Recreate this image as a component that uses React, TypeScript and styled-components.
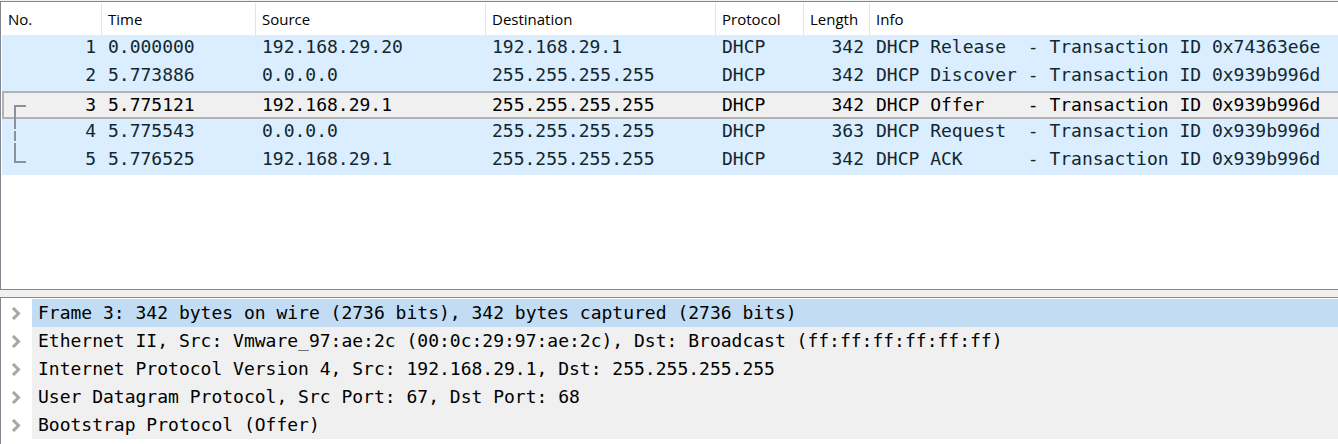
import React, { useState } from "react";
import styled, { createGlobalStyle, css } from "styled-components";

const GlobalStyle = createGlobalStyle`
  * { box-sizing: border-box; }
  body { margin: 0; background: #f0f0f0; color: #000; }
`;

const mono = css`
  font-family: "DejaVu Sans Mono", monospace;
  font-size: 18px;
`;

const Window = styled.main`
  display: flex;
  flex-direction: column;
  min-height: 100vh;
  padding-top: 1px;
`;

const Pane = styled.section`
  background: #fff;
  border-top: 1px solid #828790;
  border-left: 1px solid #828790;
  padding-left: 1px;
`;

const PacketPane = styled(Pane)`
  flex: 1;
  border-bottom: 1px solid #828790;
`;

const DetailsPane = styled(Pane)`
  padding: 1px 0 5px;
`;

const Splitter = styled.div`
  height: 7px;
  cursor: row-resize;
`;

const PacketTable = styled.table`
  width: 100%;
  table-layout: fixed;
  border-collapse: separate;
  border-spacing: 0;
`;

const Column = styled.col<{ $width?: number }>`
  width: ${(p) => (p.$width ? `${p.$width}px` : "auto")};
`;

const HeadCell = styled.th`
  height: 33px;
  padding: 0 6px;
  text-align: left;
  font: 400 15px "Open Sans", sans-serif;
  line-height: 20px;
  background: linear-gradient(#e5e5e5, #e5e5e5) right bottom / 1px 32px no-repeat;
  &:last-child { background: none; }
`;

const Cell = styled.td<{ $right?: boolean }>`
  position: relative;
  height: 28px;
  padding: 0 6px 4px;
  line-height: 24px;
  white-space: pre;
  text-align: ${(p) => (p.$right ? "right" : "left")};
`;

const PacketRow = styled.tr<{ $selected: boolean }>`
  ${mono}
  color: #12272e;
  background: #daeeff;
  ${(p) =>
    p.$selected &&
    css`
      color: #000;
      background: #f0f0f0;
      ${Cell} {
        padding-bottom: 0;
        border-top: 2px solid #b3b1b1;
        border-bottom: 2px solid #b3b1b1;
      }
      ${Cell}:first-child {
        border-left: 2px solid #b3b1b1;
      }
    `}
`;

const Conversation = styled.svg`
  position: absolute;
  left: 10px;
  top: 12px;
  z-index: 1;
  pointer-events: none;
`;

const Tree = styled.ul`
  ${mono}
  list-style: none;
  margin: 0;
  padding: 0;
`;

const TreeItem = styled.li`
  display: flex;
  height: 28px;
`;

const Toggle = styled.button`
  display: flex;
  align-items: center;
  width: 31px;
  padding: 2px 0 0 10px;
  border: 0;
  background: none;
`;

const Label = styled.span<{ $selected: boolean }>`
  flex: 1;
  padding-left: 6px;
  line-height: 28px;
  white-space: pre;
  background: ${(p) => (p.$selected ? "#c2dcf3" : "#f0f0f0")};
`;

const columns = [
  { name: "No.", width: 100 },
  { name: "Time", width: 154 },
  { name: "Source", width: 230 },
  { name: "Destination", width: 230 },
  { name: "Protocol", width: 88 },
  { name: "Length", width: 66 },
  { name: "Info" },
];

const packets = [
  { no: 1, time: "0.000000", src: "192.168.29.20", dst: "192.168.29.1", len: 342, info: "DHCP Release  - Transaction ID 0x74363e6e" },
  { no: 2, time: "5.773886", src: "0.0.0.0", dst: "255.255.255.255", len: 342, info: "DHCP Discover - Transaction ID 0x939b996d" },
  { no: 3, time: "5.775121", src: "192.168.29.1", dst: "255.255.255.255", len: 342, info: "DHCP Offer    - Transaction ID 0x939b996d" },
  { no: 4, time: "5.775543", src: "0.0.0.0", dst: "255.255.255.255", len: 363, info: "DHCP Request  - Transaction ID 0x939b996d" },
  { no: 5, time: "5.776525", src: "192.168.29.1", dst: "255.255.255.255", len: 342, info: "DHCP ACK      - Transaction ID 0x939b996d" },
];

const layers = [
  "Frame 3: 342 bytes on wire (2736 bits), 342 bytes captured (2736 bits)",
  "Ethernet II, Src: Vmware_97:ae:2c (00:0c:29:97:ae:2c), Dst: Broadcast (ff:ff:ff:ff:ff:ff)",
  "Internet Protocol Version 4, Src: 192.168.29.1, Dst: 255.255.255.255",
  "User Datagram Protocol, Src Port: 67, Dst Port: 68",
  "Bootstrap Protocol (Offer)",
];

export default function App() {
  const [layer, setLayer] = useState(0);
  return (
    <>
      <GlobalStyle />
      <Window>
        <PacketPane aria-label="Packet list">
          <PacketTable>
            <colgroup>
              {columns.map((c) => (
                <Column key={c.name} $width={c.width} />
              ))}
            </colgroup>
            <thead>
              <tr>
                {columns.map((c) => (
                  <HeadCell key={c.name} scope="col">{c.name}</HeadCell>
                ))}
              </tr>
            </thead>
            <tbody>
              {packets.map((p) => (
                <PacketRow key={p.no} $selected={p.no === 3}>
                  <Cell $right>
                    {p.no === 3 && (
                      <Conversation width="12" height="58" viewBox="0 0 12 58" fill="none" stroke="#87949b" strokeWidth="2" aria-hidden="true">
                        <path d="M12 1H1V24M1 26V36M1 38V57H12" />
                      </Conversation>
                    )}
                    {p.no}
                  </Cell>
                  <Cell>{p.time}</Cell>
                  <Cell>{p.src}</Cell>
                  <Cell>{p.dst}</Cell>
                  <Cell>DHCP</Cell>
                  <Cell $right>{p.len}</Cell>
                  <Cell>{p.info}</Cell>
                </PacketRow>
              ))}
            </tbody>
          </PacketTable>
        </PacketPane>
        <Splitter role="separator" aria-orientation="horizontal" />
        <DetailsPane aria-label="Packet details">
          <Tree>
            {layers.map((text, i) => (
              <TreeItem key={text} onClick={() => setLayer(i)}>
                <Toggle aria-label={`Expand ${text}`} aria-expanded={false}>
                  <svg width="10" height="14" viewBox="0 0 10 14" fill="none" stroke="#a6a6a6" strokeWidth="3" aria-hidden="true">
                    <path d="M2 1L7.5 6.5L2 12" />
                  </svg>
                </Toggle>
                <Label $selected={i === layer}>{text}</Label>
              </TreeItem>
            ))}
          </Tree>
        </DetailsPane>
      </Window>
    </>
  );
}
